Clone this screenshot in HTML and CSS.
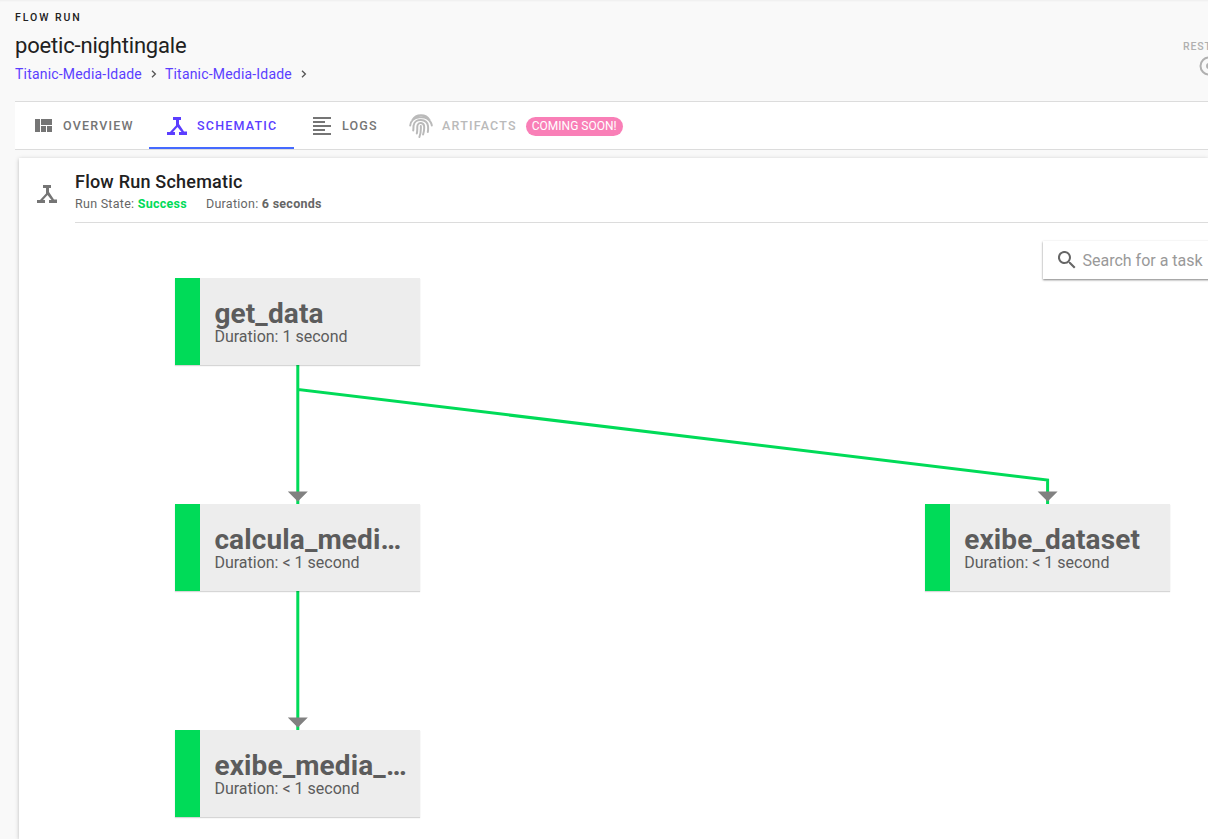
FILE: index.html
```html
<!DOCTYPE html>
<html lang="en">
<head>
<meta charset="utf-8">
<title>poetic-nightingale</title>
<link rel="stylesheet" href="styles.css">
</head>
<body>
<svg class="defs" aria-hidden="true">
  <symbol id="schematic" viewBox="0 0 20 18"><path d="M6 0h8v3h-2v4l5 7.500h3V18h-8v-3h2.500L10.500 10 6 15h2v3H0v-3h3l6-6.500V3H6z"/></symbol>
</svg>
<header class="header">
  <div class="heading">
    <div class="overline">Flow Run</div>
    <h1 class="title">poetic-nightingale</h1>
    <nav class="crumbs">
      <a>Titanic-Media-Idade</a>
      <svg class="chevron" viewBox="0 0 6 8"><path d="M1 .7 4.400 4 1 7.300"/></svg>
      <a>Titanic-Media-Idade</a>
      <svg class="chevron" viewBox="0 0 6 8"><path d="M1 .7 4.400 4 1 7.300"/></svg>
    </nav>
  </div>
  <div class="restart">
    <span>Restart</span>
    <svg viewBox="0 0 20 20"><circle cx="10" cy="10" r="8.500" fill="none" stroke="currentColor" stroke-width="2"/><circle cx="10" cy="10" r="3"/></svg>
  </div>
</header>
<div class="tabs">
  <div class="tab overview"><svg viewBox="0 0 17 13"><path d="M0 0h5v13H0zM6 0h11v6H6zM6 7h5v6H6zM12 7h5v6h-5z"/></svg><span>Overview</span></div>
  <div class="tab schematic"><svg><use href="#schematic"/></svg><span>Schematic</span></div>
  <div class="tab logs"><svg viewBox="0 0 18 18"><path d="M0 0h18v2H0zM0 4h12v2H0zM0 8h18v2H0zM0 12h12v2H0zM0 16h18v2H0z"/></svg><span>Logs</span></div>
  <div class="tab artifacts">
    <svg viewBox="0 0 24 24"><path d="M3.500 6C7-.5 17-.5 20.500 6M1.200 11.500C2 1.500 18 .5 21.800 8.500q1 2 1 3M4.200 16.500C4.700 14 4.200 13 4.700 11c1.500-7 13.300-6.500 14.300 1 .2 2 .2 4-.2 6M7.800 19.500c1-4 0-6 .8-8.500 1.200-3 6-2.500 6.500 1 .3 3-.1 6-1 8.500M11.800 12c.3 4-.1 7.500-1.400 11"/></svg>
    <span>Artifacts</span><b class="badge">COMING SOON!</b>
  </div>
</div>
<main class="card">
  <div class="card-head">
    <svg class="card-icon"><use href="#schematic"/></svg>
    <div class="card-title">
      <h2>Flow Run Schematic</h2>
      <p><span>Run State: <b class="success">Success</b></span><span>Duration: <b>6 seconds</b></span></p>
    </div>
  </div>
  <section class="canvas">
    <svg class="edges" viewBox="0 0 1189 616">
      <path class="edge" d="M278.800 140V282M278.800 140V166.500L1028.600 257V282M278.800 366V508"/>
      <path class="arrow" d="M268.800 268.500h20l-10 10zM1018.600 268.500h20l-10 10zM268.800 494.500h20l-10 10z"/>
    </svg>
    <article class="node n1"><h3>get_data</h3><p>Duration: 1 second</p></article>
    <article class="node n2"><h3>calcula_media_idade</h3><p>Duration: &lt; 1 second</p></article>
    <article class="node n3"><h3>exibe_dataset</h3><p>Duration: &lt; 1 second</p></article>
    <article class="node n4"><h3>exibe_media_idade</h3><p>Duration: &lt; 1 second</p></article>
    <label class="search"><svg viewBox="0 0 18 18"><path d="M12.500 11h-.8l-.3-.3A6.500 6.500 0 1 0 10.700 11.400l.3.300v.8l5 5 1.500-1.500zM6.500 11a4.500 4.500 0 1 1 0-9 4.500 4.500 0 0 1 0 9z"/></svg><span>Search for a task</span></label>
  </section>
</main>
</body>
</html>
```
FILE: styles.css
```css
* { box-sizing: border-box; }
body { margin: 0; width: 1208px; height: 839px; overflow: hidden; background: #f9f9f9; font-family: Roboto, sans-serif; color: #212121; }
h1, h2, h3, p { margin: 0; font-weight: 400; }
svg { fill: currentColor; flex: none; display: block; }
.defs { position: absolute; width: 0; height: 0; }
.header { height: 101px; padding: 11px 0 0 15px; display: flex; justify-content: space-between; box-shadow: inset 0 2px 2px -1px #eee; }
.overline { font-size: 10.500px; line-height: 14px; font-weight: 500; letter-spacing: 1.950px; text-transform: uppercase; }
.title { font-size: 22px; line-height: 28px; margin-top: 7px; letter-spacing: -.18px; }
.crumbs { display: flex; align-items: center; font-size: 14px; line-height: 20px; margin-top: 4px; letter-spacing: .19px; color: #5b3eff; }
.chevron { width: 6px; height: 8px; margin: 0 8px 0 9px; fill: none; stroke: #555; stroke-width: 1.300; }
.restart { width: 25px; padding-top: 30px; color: #b0b0b0; overflow: hidden; font-size: 10.500px; line-height: 12px; font-weight: 500; letter-spacing: .9px; text-transform: uppercase; }
.restart svg { width: 20px; height: 20px; margin: 3px 0 0 16px; }
.tabs { height: 49px; margin-left: 15px; background: #fff; border: solid #dcdcdc; border-width: 1px 0; display: flex; }
.tab { display: flex; align-items: center; color: #757575; font-size: 12.500px; font-weight: 500; letter-spacing: 1.200px; text-transform: uppercase; white-space: nowrap; }
.overview { width: 134px; padding-left: 20px; }
.overview svg { width: 17px; height: 13px; margin-right: 11px; }
.schematic { width: 145px; padding-left: 18px; color: #5b3eff; border-bottom: 2px solid #456aff; padding-top: 2px; }
.schematic svg { width: 20px; height: 18px; margin-right: 10px; }
.logs { padding-left: 19px; width: 115px; }
.logs svg { width: 18px; height: 18px; margin-right: 11px; }
.artifacts { color: #bababa; }
.artifacts svg { width: 24px; height: 24px; margin-right: 9px; fill: none; stroke: currentColor; stroke-width: 2; stroke-linecap: round; }
.badge { margin: 1px 0 0 9px; padding: 0 6px; border-radius: 10px; background: #f97fb7; color: #fff; font-size: 12px; line-height: 19px; font-weight: 400; letter-spacing: 0; }
.card { margin: 8px 0 0 19px; height: 681px; background: #fff; box-shadow: 0 1px 4px rgba(0,0,0,.25); }
.card-head { display: flex; height: 65px; }
.card-icon { width: 20px; height: 18px; margin: 27px 18px 0; color: #757575; }
.card-title { flex: 1; border-bottom: 1px solid #dcdcdc; padding-top: 12px; }
.card-title h2 { font-size: 18px; line-height: 24px; font-weight: 500; letter-spacing: .22px; }
.card-title p { display: flex; gap: 19px; margin-top: 1px; font-size: 12.500px; line-height: 18px; letter-spacing: .27px; color: #666; }
.success { color: #00db58; }
.canvas { position: relative; height: 616px; }
.edges { position: absolute; left: 0; top: 0; width: 1189px; height: 616px; }
.edge { fill: none; stroke: #00db58; stroke-width: 3; }
.arrow { fill: #818181; }
.node { position: absolute; width: 245px; height: 87px; padding: 21px 12px 0 14px; border-left: 25px solid #00db58; background: #ededed; color: #5c5c5c; box-shadow: 0 1px 1px rgba(0,0,0,.16); }
.node h3 { font-size: 28px; line-height: 30px; font-weight: 700; letter-spacing: .12px; overflow: hidden; text-overflow: ellipsis; white-space: nowrap; }
.node p { font-size: 16px; line-height: 18px; margin-top: -1px; }
.n1 { left: 156.400px; top: 55.400px; }
.n2 { left: 156.400px; top: 281.400px; }
.n3 { left: 906.200px; top: 281.400px; }
.n4 { left: 156.400px; top: 507.400px; }
.search { position: absolute; left: 1024px; top: 18px; width: 180px; height: 38px; padding-left: 14.500px; display: flex; align-items: center; background: #fff; color: #999; font-size: 16px; box-shadow: 0 1px 2px rgba(0,0,0,.5); white-space: nowrap; }
.search svg { width: 18px; height: 18px; margin-right: 7px; color: #666; }
```
